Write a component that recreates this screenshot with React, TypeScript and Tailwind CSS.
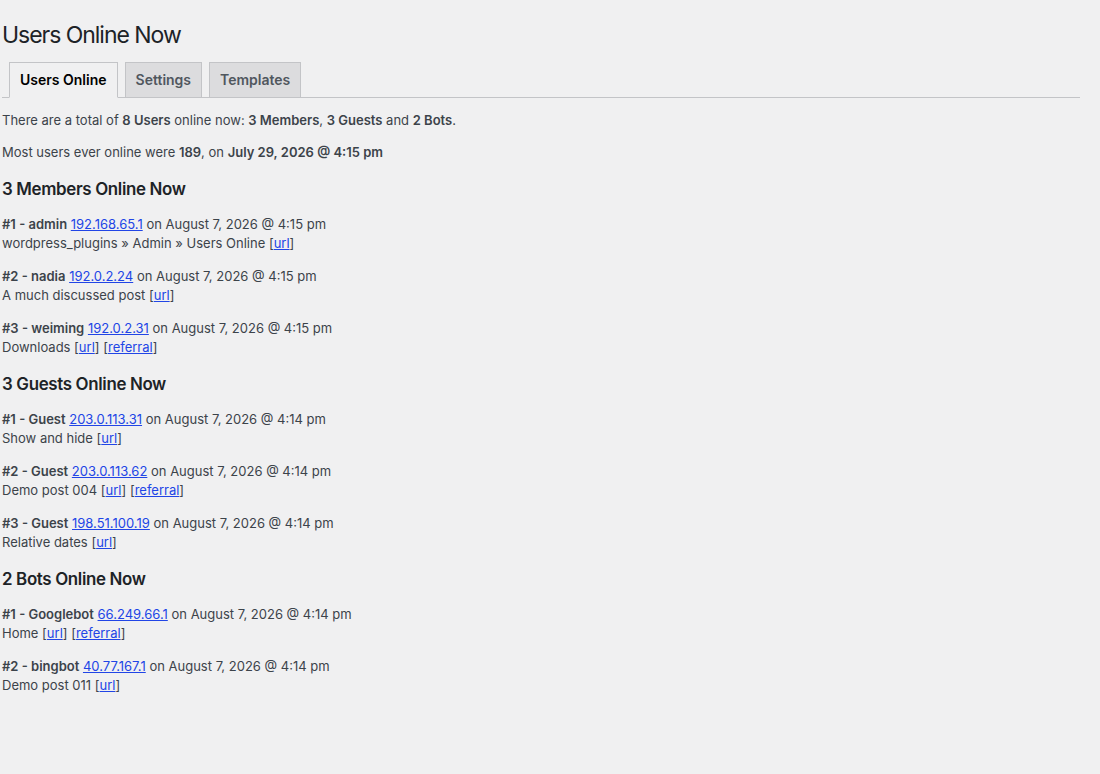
import React from "react";

type Entry = {
  label: string;
  ip: string;
  time: string;
  page: string;
  referral?: boolean;
};

const members: Entry[] = [
  { label: "#1 - admin", ip: "192.168.65.1", time: "August 7, 2026 @ 4:15 pm", page: "wordpress_plugins » Admin » Users Online" },
  { label: "#2 - nadia", ip: "192.0.2.24", time: "August 7, 2026 @ 4:15 pm", page: "A much discussed post" },
  { label: "#3 - weiming", ip: "192.0.2.31", time: "August 7, 2026 @ 4:15 pm", page: "Downloads", referral: true },
];

const guests: Entry[] = [
  { label: "#1 - Guest", ip: "203.0.113.31", time: "August 7, 2026 @ 4:14 pm", page: "Show and hide" },
  { label: "#2 - Guest", ip: "203.0.113.62", time: "August 7, 2026 @ 4:14 pm", page: "Demo post 004", referral: true },
  { label: "#3 - Guest", ip: "198.51.100.19", time: "August 7, 2026 @ 4:14 pm", page: "Relative dates" },
];

const bots: Entry[] = [
  { label: "#1 - Googlebot", ip: "66.249.66.1", time: "August 7, 2026 @ 4:14 pm", page: "Home", referral: true },
  { label: "#2 - bingbot", ip: "40.77.167.1", time: "August 7, 2026 @ 4:14 pm", page: "Demo post 011" },
];

function A({ children }: { children: React.ReactNode }) {
  return (
    <a href="#" className="text-[#2145e6] underline">
      {children}
    </a>
  );
}

function Row({ e }: { e: Entry }) {
  return (
    <p className="my-[13px] leading-[1.5]">
      <strong className="font-semibold">{e.label}</strong> <A>{e.ip}</A> on {e.time}
      <br />
      {e.page} [<A>url</A>]
      {e.referral && (
        <>
          {" "}[<A>referral</A>]
        </>
      )}
    </p>
  );
}

function Section({ title, items }: { title: string; items: Entry[] }) {
  return (
    <>
      <h2 className="my-[16.9px] text-[16.9px] font-semibold leading-[18.2px] tracking-[-0.02em] text-[#1d2327]">
        {title}
      </h2>
      {items.map((e) => (
        <Row key={e.label} e={e} />
      ))}
    </>
  );
}

export default function App() {
  return (
    <div
      className="min-h-screen bg-[#f0f0f1] text-[13px] leading-[18.2px] text-[#3c434a]"
      style={{ fontFamily: "Inter, 'Liberation Sans', sans-serif" }}
    >
      <div className="ml-[2px] mr-[20px] pt-[10px]">
        <h1 className="pt-[11px] pb-[2px] text-[23px] font-normal leading-[1.3] tracking-[-0.045em] text-[#1d2327]">
          Users Online Now
        </h1>

        <nav className="flex items-start border-b border-[#c3c4c7] pt-[9px]">
          <a className="-mb-px ml-[7px] border border-[#c3c4c7] border-b-[#f0f0f1] bg-[#f0f0f1] px-[10px] py-[5px] text-[14px] font-semibold leading-[24px] text-black">
            Users Online
          </a>
          <a className="ml-[7px] border border-b-0 border-[#c3c4c7] bg-[#dcdcde] px-[10px] py-[5px] text-[14px] font-semibold leading-[24px] text-[#50575e]">
            Settings
          </a>
          <a className="ml-[7px] border border-b-0 border-[#c3c4c7] bg-[#dcdcde] px-[10px] py-[5px] text-[14px] font-semibold leading-[24px] text-[#50575e]">
            Templates
          </a>
        </nav>

        <p className="my-[13px] leading-[1.5]">
          There are a total of <strong className="font-semibold">8 Users</strong> online now:{" "}
          <strong className="font-semibold">3 Members</strong>, <strong className="font-semibold">3 Guests</strong> and{" "}
          <strong className="font-semibold">2 Bots</strong>.
        </p>
        <p className="my-[13px] leading-[1.5]">
          Most users ever online were <strong className="font-semibold">189</strong>, on{" "}
          <strong className="font-semibold">July 29, 2026 @ 4:15 pm</strong>
        </p>

        <Section title="3 Members Online Now" items={members} />
        <Section title="3 Guests Online Now" items={guests} />
        <Section title="2 Bots Online Now" items={bots} />
      </div>
    </div>
  );
}
